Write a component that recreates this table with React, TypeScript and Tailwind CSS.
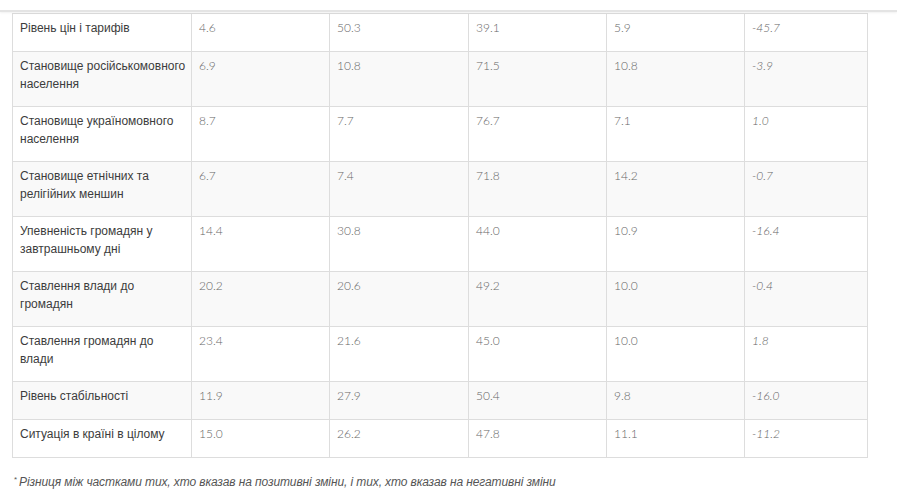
import React from "react";

type Row = { label: string[]; v: string[]; d: string };

const rows: Row[] = [
  { label: ["Рівень цін і тарифів"], v: ["4.6", "50.3", "39.1", "5.9"], d: "-45.7" },
  { label: ["Становище російськомовного", "населення"], v: ["6.9", "10.8", "71.5", "10.8"], d: "-3.9" },
  { label: ["Становище україномовного", "населення"], v: ["8.7", "7.7", "76.7", "7.1"], d: "1.0" },
  { label: ["Становище етнічних та", "релігійних меншин"], v: ["6.7", "7.4", "71.8", "14.2"], d: "-0.7" },
  { label: ["Упевненість громадян у", "завтрашньому дні"], v: ["14.4", "30.8", "44.0", "10.9"], d: "-16.4" },
  { label: ["Ставлення влади до", "громадян"], v: ["20.2", "20.6", "49.2", "10.0"], d: "-0.4" },
  { label: ["Ставлення громадян до", "влади"], v: ["23.4", "21.6", "45.0", "10.0"], d: "1.8" },
  { label: ["Рівень стабільності"], v: ["11.9", "27.9", "50.4", "9.8"], d: "-16.0" },
  { label: ["Ситуація в країні в цілому"], v: ["15.0", "26.2", "47.8", "11.1"], d: "-11.2" },
];

const widths = ["w-[179px]", "w-[138px]", "w-[139px]", "w-[138px]", "w-[138px]", "w-[123px]"];

export default function App() {
  return (
    <div className="relative w-[897px] h-[499px] bg-white overflow-hidden">
      <div className="absolute left-0 top-0 w-full h-[12px] bg-white border-b-[2px] border-[#e4e4e4] shadow-[0_1px_2px_rgba(0,0,0,0.06)] z-10" />
      <div className="pt-[13px] pl-[12px]">
        <table className="border-collapse table-fixed w-[855px] text-[12px]">
          <colgroup>
            {widths.map((w, i) => (
              <col key={i} className={w} />
            ))}
          </colgroup>
          <tbody>
            {rows.map((r, i) => (
              <tr
                key={i}
                className={`${r.label.length > 1 ? "h-[55px]" : "h-[38px]"} ${i % 2 === 1 ? "bg-[#f9f9f9]" : "bg-white"}`}
              >
                <td className="border border-[#dddddd] align-top pt-[5px] pl-[7px] pr-[4px] leading-[18px] text-[#3c3c3c] font-['Liberation_Sans',Arial,sans-serif]">
                  {r.label.map((l, j) => (
                    <div key={j} className="whitespace-nowrap">{l}</div>
                  ))}
                </td>
                {r.v.map((v, j) => (
                  <td
                    key={j}
                    className="border border-[#dddddd] align-top pt-[5px] pl-[7px] leading-[18px] text-[#666] font-light font-['Lato','Open_Sans',sans-serif]"
                  >
                    {v}
                  </td>
                ))}
                <td className="border border-[#dddddd] align-top pt-[5px] pl-[7px] leading-[18px] text-[#666] italic font-light font-['Lato','Open_Sans',sans-serif]">
                  {r.d}
                </td>
              </tr>
            ))}
          </tbody>
        </table>
        <div className="mt-[15px] pl-[2px] text-[12px] leading-[18px] italic text-[#555] font-['Liberation_Sans',Arial,sans-serif] tracking-[-0.1px]">
          <sup className="text-[8px] mr-[2px] not-italic">*</sup>
          Різниця між частками тих, хто вказав на позитивні зміни, і тих, хто вказав на негативні зміни
        </div>
      </div>
    </div>
  );
}
